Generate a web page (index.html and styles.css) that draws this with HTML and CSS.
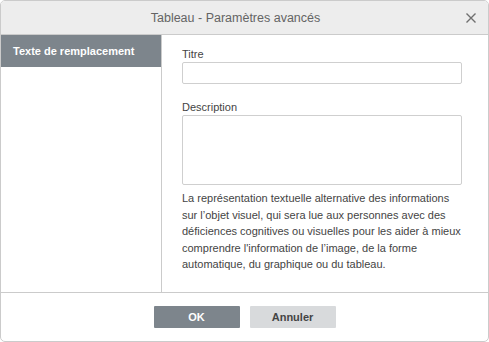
FILE: index.html
```html
<!DOCTYPE html>
<html lang="fr">
<head>
<meta charset="utf-8">
<title>Tableau - Paramètres avancés</title>
<link rel="stylesheet" href="styles.css">
</head>
<body>
<div class="dialog">
  <div class="header">
    <span class="title">Tableau - Paramètres avancés</span>
    <button class="close" aria-label="Fermer">
      <svg width="10" height="10" viewBox="0 0 10 10"><path d="M0.5 0.5 L9.5 9.5 M9.5 0.5 L0.5 9.5" stroke="#6f6f6f" stroke-width="1.4" fill="none"/></svg>
    </button>
  </div>
  <div class="body">
    <div class="sidebar">
      <div class="tab active">Texte de remplacement</div>
    </div>
    <div class="content">
      <label class="label">Titre</label>
      <input class="input" type="text">
      <label class="label label-desc">Description</label>
      <textarea class="textarea"></textarea>
      <p class="help">La représentation textuelle alternative des informations sur l’objet visuel, qui sera lue aux personnes avec des déficiences cognitives ou visuelles pour les aider à mieux comprendre l'information de l’image, de la forme automatique, du graphique ou du tableau.</p>
    </div>
  </div>
  <div class="footer">
    <button class="btn btn-primary">OK</button>
    <button class="btn btn-secondary">Annuler</button>
  </div>
</div>
</body>
</html>
```
FILE: styles.css
```css
html, body {
  margin: 0;
  padding: 0;
  background: #ffffff;
}
body {
  font-family: "Liberation Sans", Arial, sans-serif;
  font-size: 11px;
  color: #444444;
}
.dialog {
  width: 489px;
  height: 342px;
  box-sizing: border-box;
  border: 1px solid #cbcbcb;
  border-radius: 5px;
  overflow: hidden;
  display: flex;
  flex-direction: column;
  background: #ffffff;
}
.header {
  position: relative;
  height: 34px;
  flex: none;
  box-sizing: border-box;
  padding-right: 18px;
  background: #ededed;
  border-bottom: 1px solid #cbcbcb;
  display: flex;
  align-items: center;
  justify-content: center;
}
.title {
  font-size: 12.5px;
  color: #646464;
}
.close {
  position: absolute;
  right: 12px;
  top: 12px;
  width: 10px;
  height: 10px;
  padding: 0;
  border: 0;
  background: transparent;
  display: flex;
}
.body {
  flex: 1;
  display: flex;
  min-height: 0;
}
.sidebar {
  width: 160px;
  flex: none;
  border-right: 1px solid #cbcbcb;
}
.tab {
  height: 32px;
  line-height: 32px;
  padding-left: 12px;
  font-weight: bold;
  font-size: 11px;
  color: #ffffff;
}
.tab.active {
  background: #7d858c;
}
.content {
  flex: 1;
  padding: 12px 26px 0 20px;
  display: flex;
  flex-direction: column;
}
.label {
  display: block;
  line-height: 14px;
  margin-bottom: 1px;
  color: #444444;
}
.label-desc {
  margin-top: 16px;
}
.input {
  box-sizing: border-box;
  width: 280px;
  height: 22px;
  border: 1px solid #cfcfcf;
  border-radius: 2px;
  margin: 0;
  padding: 0 4px;
  font: inherit;
}
.textarea {
  box-sizing: border-box;
  width: 280px;
  height: 70px;
  border: 1px solid #cfcfcf;
  border-radius: 2px;
  margin: 0;
  padding: 3px 4px;
  font: inherit;
  resize: none;
}
.help {
  margin: 5px 0 0;
  line-height: 16.5px;
  width: 280px;
  color: #444444;
}
.footer {
  height: 48px;
  flex: none;
  border-top: 1px solid #cbcbcb;
  display: flex;
  justify-content: center;
  align-items: center;
  gap: 10px;
}
.btn {
  width: 86px;
  height: 22px;
  border: 0;
  border-radius: 1px;
  padding: 0;
  font-family: "Liberation Sans", Arial, sans-serif;
  font-size: 11px;
  font-weight: bold;
}
.btn-primary {
  background: #7d858c;
  color: #ffffff;
}
.btn-secondary {
  background: #d8dadc;
  color: #444444;
}
```
